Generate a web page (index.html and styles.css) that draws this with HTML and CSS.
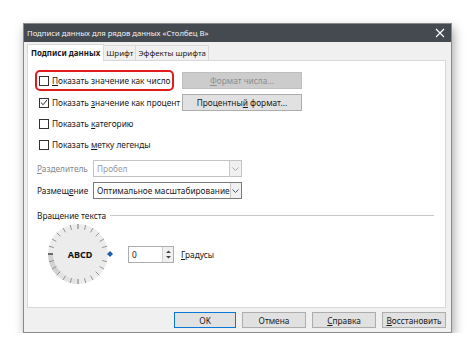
FILE: index.html
```html
<!DOCTYPE html>
<html lang="ru">
<head>
<meta charset="utf-8">
<link rel="stylesheet" href="styles.css">
</head>
<body>
<div class="dialog">
  <div class="titlebar">
    <span class="title">Подписи данных для рядов данных «Столбец B»</span>
    <svg class="close" width="10" height="10" viewBox="0 0 10 10"><path d="M1 1L9 9M9 1L1 9" stroke="#fff" stroke-width="1.2"/></svg>
  </div>
  <div class="tabs">
    <div class="tab active">Подписи данных</div>
    <div class="tab">Шрифт</div>
    <div class="tab">Эффекты шрифта</div>
  </div>
  <div class="panel">
    <div class="opts">
      <div class="row first">
        <div class="check-wrap">
          <label class="chk"><span class="box"></span><span class="lbl"><u>П</u>оказать значение как число</span></label>
          <div class="highlight"></div>
        </div>
        <div class="btn disabled"><span><u>Ф</u>ормат числа...</span></div>
      </div>
      <div class="row">
        <label class="chk"><span class="box checked"><svg width="9" height="9" viewBox="0 0 9 9"><path d="M1 4.5L3.5 7L8 1.5" fill="none" stroke="#222" stroke-width="1.1"/></svg></span><span class="lbl">Показать <u>з</u>начение как процент</span></label>
        <div class="btn"><span>Процентны<u>й</u> формат...</span></div>
      </div>
      <div class="row">
        <label class="chk"><span class="box"></span><span class="lbl">Показать <u>к</u>атегорию</span></label>
      </div>
      <div class="row">
        <label class="chk"><span class="box"></span><span class="lbl">Показать <u>м</u>етку легенды</span></label>
      </div>
    </div>
    <div class="fields">
      <div class="field disabled">
        <span class="flabel"><u>Р</u>азделитель</span>
        <div class="combo"><span>Пробел</span><span class="arrow"><svg width="7" height="4" viewBox="0 0 7 4"><path d="M0.5 0.5L3.5 3.5L6.5 0.5" fill="none" stroke="#aaa"/></svg></span></div>
      </div>
      <div class="field">
        <span class="flabel">Размещ<u>е</u>ние</span>
        <div class="combo"><span>Оптимальное масштабирование</span><span class="arrow"><svg width="7" height="4" viewBox="0 0 7 4"><path d="M0.5 0.5L3.5 3.5L6.5 0.5" fill="none" stroke="#555"/></svg></span></div>
      </div>
    </div>
    <div class="section">
      <span>Вращение текста</span><span class="rule"></span>
    </div>
    <div class="rotate">
      <svg class="dial" width="76" height="64" viewBox="-37 -32 76 64">
        <circle r="30" fill="#ececec"/>
        <g id="ticks"></g>
        <text x="2" y="3.5" text-anchor="middle" class="abcd">ABCD</text>
        <path d="M32 -3L35 0L32 3L29 0Z" fill="#1f5fa8"/>
      </svg>
      <div class="spin">
        <span>0</span>
        <span class="spinbtn"><svg width="7" height="11" viewBox="0 0 7 11"><path d="M1 4L3.5 1.5L6 4Z M1 7L3.5 9.5L6 7Z" fill="#444"/></svg></span>
      </div>
      <span class="deg"><u>Г</u>радусы</span>
    </div>
  </div>
  <div class="footer">
    <div class="fbtn ok">OK</div>
    <div class="fbtn">Отмена</div>
    <div class="fbtn"><span><u>С</u>правка</span></div>
    <div class="fbtn"><span><u>В</u>осстановить</span></div>
  </div>
</div>
<script>
(function(){
  var g=document.getElementById('ticks');
  var ns='http://www.w3.org/2000/svg';
  function arcSeg(a1,a2,r1,r2,fill){
    var p=document.createElementNS(ns,'path');
    function pt(r,a){var t=a*Math.PI/180;return (r*Math.cos(t)).toFixed(2)+' '+(r*Math.sin(t)).toFixed(2);}
    p.setAttribute('d','M'+pt(r2,a1)+' A'+r2+' '+r2+' 0 0 1 '+pt(r2,a2)+' L'+pt(r1,a2)+' A'+r1+' '+r1+' 0 0 0 '+pt(r1,a1)+'Z');
    p.setAttribute('fill',fill);
    g.appendChild(p);
  }
  arcSeg(95,135,25,30,'#e2e2e2');
  arcSeg(135,178,25,30,'#d2d2d2');
  for(var i=0;i<24;i++){
    var a=i*15;
    if(a===0) continue;
    var rad=a*Math.PI/180;
    var r1=25,r2=30;
    var l=document.createElementNS(ns,'line');
    l.setAttribute('x1',(r1*Math.cos(rad)).toFixed(2));
    l.setAttribute('y1',(r1*Math.sin(rad)).toFixed(2));
    l.setAttribute('x2',(r2*Math.cos(rad)).toFixed(2));
    l.setAttribute('y2',(r2*Math.sin(rad)).toFixed(2));
    l.setAttribute('stroke',a===180?'#333':(a===90||a===270)?'#666':'#8a8a8a');
    l.setAttribute('stroke-width',a===180?'1.4':'0.9');
    g.appendChild(l);
  }
})();
</script>
</body>
</html>
```
FILE: styles.css
```css
* { box-sizing: border-box; }
html, body { margin: 0; padding: 0; background: #fff; }
body {
  font-family: "Noto Sans", "Open Sans", sans-serif;
  font-size: 8.3px;
  color: #1a1a1a;
  padding: 23px 0 0 23px;
}
u { text-decoration: underline; text-underline-offset: 1px; }
.dialog {
  width: 429px;
  height: 310px;
  background: #f0f0f0;
  border: 1px solid #8a8a8a;
  box-shadow: 2px 5px 10px rgba(0,0,0,0.35);
  display: flex;
  flex-direction: column;
}
.titlebar {
  height: 18px;
  background: #454a50;
  color: #f2f2f2;
  display: flex;
  align-items: center;
  justify-content: space-between;
  padding: 0 6px 0 3px;
  font-size: 7.7px;
}
.tabs {
  display: flex;
  align-items: flex-end;
  height: 17px;
  padding-left: 3px;
  margin-top: 1px;
  font-size: 7.9px;
}
.tab {
  height: 15px;
  line-height: 14px;
  padding: 0 2px;
  border: 1px solid #d9d9d9;
  border-bottom: none;
  background: #f0f0f0;
  margin-left: -1px;
}
.tab.active {
  height: 17px;
  line-height: 16px;
  background: #fff;
  font-weight: bold;
  padding: 0 3px;
  margin-left: 0;
  position: relative;
  z-index: 1;
  margin-bottom: -1px;
}
.panel {
  margin: 0 5px 0 3px;
  height: 248px;
  background: #fff;
  border: 1px solid #d9d9d9;
  padding: 8px 0 0 11px;
  display: flex;
  flex-direction: column;
}
.opts { display: flex; flex-direction: column; }
.row {
  height: 21px;
  display: flex;
  align-items: center;
}
.row.first { height: 23px; }
.check-wrap { position: relative; width: 143px; }
.highlight {
  position: absolute;
  left: -4px; top: -4px;
  width: 139px; height: 21px;
  border: 2px solid #e21c1c;
  border-radius: 5px;
}
.chk { display: flex; align-items: center; width: 143px; height: 13px; }
.box {
  width: 10px; height: 10px;
  border: 1px solid #333;
  background: #fff;
  margin-right: 3px;
  display: flex; align-items: center; justify-content: center;
}
.lbl { white-space: nowrap; }
.btn {
  width: 120px; height: 17px;
  background: #e1e1e1;
  border: 1px solid #adadad;
  display: flex; align-items: center; justify-content: center;
  white-space: nowrap;
}
.btn.disabled { background: #cccccc; border-color: #bfbfbf; color: #8d8d8d; }
.fields { margin-top: 5px; display: flex; flex-direction: column; gap: 5px; }
.field { display: flex; align-items: center; }
.flabel { width: 56px; margin-left: -2px; white-space: nowrap; }
.combo {
  width: 149px; height: 17px;
  border: 1px solid #7a7a7a;
  background: #fff;
  display: flex; align-items: center; justify-content: space-between;
  padding-left: 3px;
  white-space: nowrap;
}
.arrow {
  width: 12px; height: 15px;
  border-left: 1px solid #c8c8c8;
  background: #f0f0f0;
  display: flex; align-items: center; justify-content: center;
}
.field.disabled .flabel { color: #8a8a8a; }
.field.disabled .combo { border-color: #c4c4c4; color: #9a9a9a; }
.section {
  margin-top: 11px;
  display: flex; align-items: center;
  margin-left: -2px;
  margin-right: 11px;
}
.rule { flex: 1; height: 1px; background: #c8c8c8; margin-left: 4px; }
.rotate { display: flex; align-items: center; margin-top: 1px; margin-left: 0; }
.dial { margin-left: 2px; }
.abcd { font-family: "Noto Sans", sans-serif; font-weight: bold; font-size: 9px; fill: #111; }
.spin {
  margin-left: 11px;
  width: 46px; height: 17px;
  border: 1px solid #adadad;
  background: #fff;
  display: flex; align-items: center; justify-content: space-between;
  padding-left: 3px;
}
.spinbtn {
  width: 11px; height: 15px;
  border-left: 1px solid #d0d0d0;
  background: #f0f0f0;
  display: flex; align-items: center; justify-content: center;
}
.deg { margin-left: 7px; }
.footer {
  flex: 1;
  display: flex;
  align-items: center;
  justify-content: flex-end;
  gap: 6px;
  padding-right: 5px;
}
.fbtn {
  width: 64px; height: 16px;
  background: #e1e1e1;
  border: 1px solid #adadad;
  display: flex; align-items: center; justify-content: center;
}
.fbtn.ok { border: 1px solid #0a78d7; width: 62px; }
```
